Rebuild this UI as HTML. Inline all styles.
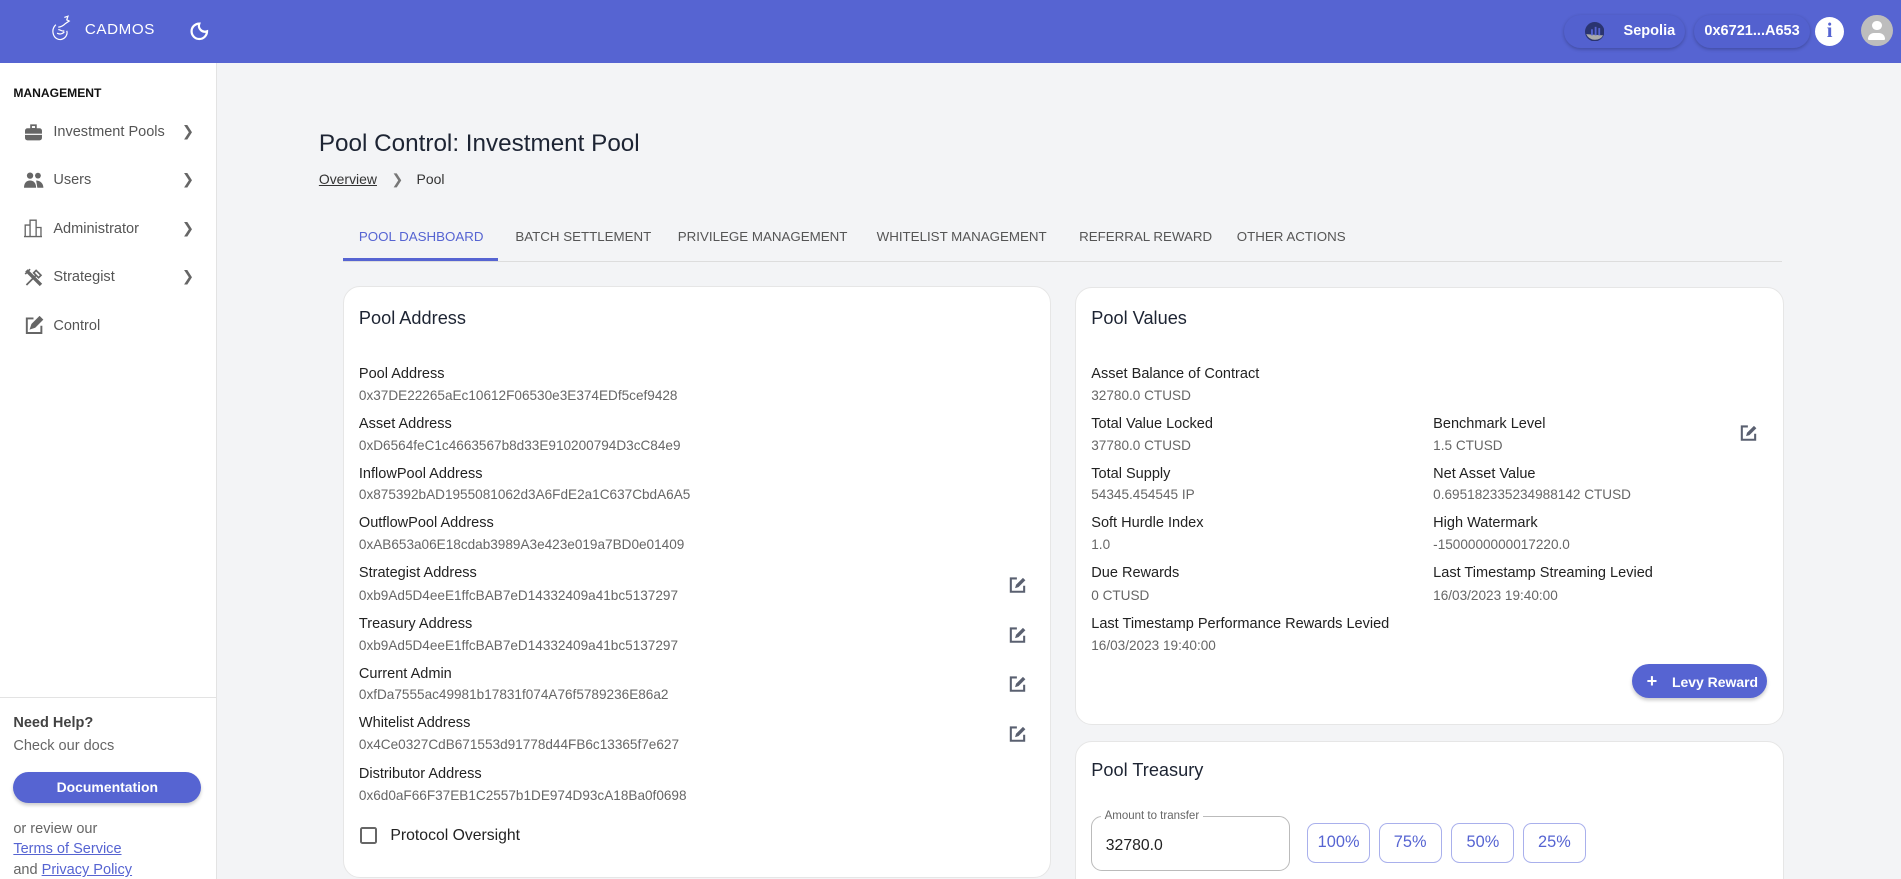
<!DOCTYPE html>
<html><head><meta charset="utf-8"><style>
*{box-sizing:border-box;margin:0;padding:0}
html,body{width:1901px;height:879px;overflow:hidden}
body{font-family:"Liberation Sans",Arial,sans-serif;background:#f3f4f6;}
#w{zoom:1.2125;width:1568px;height:725px;position:relative;overflow:hidden}
.a{position:absolute;white-space:nowrap}
.hdr{left:0;top:0;width:1568px;height:52px;background:#5664d2}
.pill{height:28px;border-radius:14px;background:#5361cf;box-shadow:0 1px 3px rgba(0,0,0,.25);color:#fff;font-weight:bold;font-size:12px;line-height:28px}
.side{left:0;top:52px;width:179px;height:673px;background:#fff;border-right:1px solid #e3e3e3}
.it{font-size:12px;color:#555;left:44px}
.chev{left:150px;font-size:12px;color:#666}
.card{background:#fff;border-radius:14px;border:1px solid #e6e6e6}
.ct{font-size:15px;color:#1d2433}
.lb{font-size:12px;color:#222}
.vl{font-size:11.2px;color:#666}
.tab{top:189px;font-size:11px;color:#555}
.pb{top:679px;height:33px;border:1px solid #a9b0ec;border-radius:7px;color:#5664d2;font-size:13.5px;text-align:center;line-height:31px}
</style></head><body><div id="w">
<div class="a hdr"></div>
<svg class="a" style="left:42px;top:12px" width="18" height="22" viewBox="0 0 18 22" fill="none" stroke="#fff" stroke-width="1"><path d="M11 2l3-1-1 3 2 1-3 2c-2 2-4 3-6 3M4 8c-2 2-3 5-2 8 1 3 4 5 7 4 3-1 5-4 4-7M6 12c2 0 3 2 5 1M5 15c2 1 4 1 6-1"/></svg>
<div class="a" style="left:70px;top:17px;color:#fff;font-size:12.5px;letter-spacing:.5px">CADMOS</div>
<svg class="a" style="left:156px;top:17px" width="17" height="17" viewBox="0 0 24 24"><path d="M12 3a9 9 0 1 0 9 9 7 7 0 0 1-9-9z" fill="none" stroke="#fff" stroke-width="2.6"/></svg>
<div class="a pill" style="left:1290px;top:12px;width:100px"><svg style="position:absolute;left:17px;top:6px" width="16" height="16" viewBox="0 0 16 16"><circle cx="8" cy="8" r="8" fill="#2a3470"/><path d="M1 10a8 8 0 0 0 14 1z" fill="#aaa"/><rect x="5" y="6" width="1.5" height="5" fill="#5664d2"/><rect x="8" y="4" width="1.5" height="7" fill="#5664d2"/><rect x="11" y="5" width="1.5" height="6" fill="#5664d2"/></svg><span style="position:absolute;left:49px">Sepolia</span></div>
<div class="a pill" style="left:1397px;top:12px;width:96px;text-align:center">0x6721...A653</div>
<div class="a" style="left:1497px;top:14px;width:24px;height:24px;border-radius:50%;background:#fff;color:#5664d2;font-weight:bold;font-size:17px;text-align:center;line-height:24px;font-family:'Liberation Serif',serif">i</div>
<div class="a" style="left:1535px;top:12px;width:26px;height:26px;border-radius:50%;background:#bdbdbd;overflow:hidden"><div style="position:absolute;left:9px;top:5px;width:8px;height:8px;border-radius:50%;background:#fff"></div><div style="position:absolute;left:6px;top:15px;width:14px;height:6px;border-radius:6px 6px 1px 1px;background:#fff"></div></div>

<div class="a side"></div>
<div class="a" style="left:11px;top:71px;font-size:10px;font-weight:bold;color:#111">MANAGEMENT</div>
<svg class="a" style="left:21px;top:102px" width="14" height="14" viewBox="0 0 14 14"><rect x="5" y="1" width="4" height="3" fill="none" stroke="#666" stroke-width="1.4"/><rect x="0" y="3.5" width="14" height="10" rx="2" fill="#666"/><rect x="0" y="8" width="14" height="1" fill="#fff"/></svg>
<div class="a it" style="top:102px">Investment Pools</div><div class="a chev" style="top:102px">❯</div>
<svg class="a" style="left:20px;top:142px" width="16" height="14" viewBox="0 0 16 14"><circle cx="5" cy="3" r="2.6" fill="#666"/><circle cx="11.5" cy="3" r="2.4" fill="#666"/><path d="M0 13c0-4 2-6 5-6s5 2 5 6zM10 7c3 0 6 2 6 6h-5z" fill="#666"/></svg>
<div class="a it" style="top:142px">Users</div><div class="a chev" style="top:142px">❯</div>
<svg class="a" style="left:20px;top:181px" width="15" height="15" viewBox="0 0 15 15" fill="none" stroke="#666" stroke-width="1.1"><path d="M1 14V5h4v9M5 14V1h5v13M10 14V7h4v7M0 14.5h15"/></svg>
<div class="a it" style="top:182px">Administrator</div><div class="a chev" style="top:182px">❯</div>
<svg class="a" style="left:20px;top:221px" width="16" height="16" viewBox="0 0 16 16" fill="none" stroke="#666" stroke-width="1.4"><path d="M2 14l8-8M10 2l4 4-2 2-4-4zM3 2l11 11-1 1L2 3zM1 5l4-4"/></svg>
<div class="a it" style="top:222px">Strategist</div><div class="a chev" style="top:222px">❯</div>
<svg class="a" style="left:21px;top:261px" width="15" height="15" viewBox="0 0 15 15" fill="none" stroke="#666" stroke-width="1.6"><path d="M7 2H1.5v12h12V8"/><path d="M5 10l1-3 6-6 2 2-6 6z" fill="#666"/></svg>
<div class="a it" style="top:262px">Control</div>
<div class="a" style="left:0;top:575px;width:179px;border-top:1px solid #e3e3e3"></div>
<div class="a" style="left:11px;top:590px;font-size:12px;color:#222;font-weight:bold;opacity:.85">Need Help?</div>
<div class="a" style="left:11px;top:609px;font-size:12px;color:#666">Check our docs</div>
<div class="a" style="left:11px;top:637px;width:155px;height:25px;border-radius:13px;background:#5664d2;color:#fff;font-size:11.5px;font-weight:bold;text-align:center;line-height:25px;box-shadow:0 2px 3px rgba(0,0,0,.2)">Documentation</div>
<div class="a" style="left:11px;top:677px;font-size:12px;color:#666">or review our</div>
<div class="a" style="left:11px;top:694px;font-size:12px;color:#5664d2;text-decoration:underline">Terms of Service</div>
<div class="a" style="left:11px;top:711px;font-size:12px;color:#666">and <span style="color:#5664d2;text-decoration:underline">Privacy Policy</span></div>

<div class="a" style="left:263px;top:107px;font-size:20px;color:#1d2433">Pool Control: Investment Pool</div>
<div class="a" style="left:263px;top:141px;font-size:11.5px;color:#333"><span style="text-decoration:underline">Overview</span><span style="margin:0 11px 0 12px;color:#777">❯</span>Pool</div>

<div class="a" style="left:283px;top:215px;width:1187px;border-top:1px solid #ddd"></div>
<div class="a" style="left:283px;top:213px;width:128px;height:2px;background:#5664d2"></div>
<div class="a tab" style="left:296px;color:#5664d2">POOL DASHBOARD</div>
<div class="a tab" style="left:425px">BATCH SETTLEMENT</div>
<div class="a tab" style="left:559px">PRIVILEGE MANAGEMENT</div>
<div class="a tab" style="left:723px">WHITELIST MANAGEMENT</div>
<div class="a tab" style="left:890px">REFERRAL REWARD</div>
<div class="a tab" style="left:1020px">OTHER ACTIONS</div>

<div class="a card" style="left:283px;top:236px;width:584px;height:488px"></div>
<div class="a ct" style="left:296px;top:254px">Pool Address</div>
<div class="a lb" style="left:296px;top:302px">Pool Address</div><div class="a vl" style="left:296px;top:320px">0x37DE22265aEc10612F06530e3E374EDf5cef9428</div>
<div class="a lb" style="left:296px;top:343px">Asset Address</div><div class="a vl" style="left:296px;top:361px">0xD6564feC1c4663567b8d33E910200794D3cC84e9</div>
<div class="a lb" style="left:296px;top:384px">InflowPool Address</div><div class="a vl" style="left:296px;top:402px">0x875392bAD1955081062d3A6FdE2a1C637CbdA6A5</div>
<div class="a lb" style="left:296px;top:425px">OutflowPool Address</div><div class="a vl" style="left:296px;top:443px">0xAB653a06E18cdab3989A3e423e019a7BD0e01409</div>
<div class="a lb" style="left:296px;top:466px">Strategist Address</div><div class="a vl" style="left:296px;top:485px">0xb9Ad5D4eeE1ffcBAB7eD14332409a41bc5137297</div>
<div class="a lb" style="left:296px;top:508px">Treasury Address</div><div class="a vl" style="left:296px;top:526px">0xb9Ad5D4eeE1ffcBAB7eD14332409a41bc5137297</div>
<div class="a lb" style="left:296px;top:549px">Current Admin</div><div class="a vl" style="left:296px;top:567px">0xfDa7555ac49981b17831f074A76f5789236E86a2</div>
<div class="a lb" style="left:296px;top:590px">Whitelist Address</div><div class="a vl" style="left:296px;top:608px">0x4Ce0327CdB671553d91778d44FB6c13365f7e627</div>
<div class="a lb" style="left:296px;top:632px">Distributor Address</div><div class="a vl" style="left:296px;top:650px">0x6d0aF66F37EB1C2557b1DE974D93cA18Ba0f0698</div>
<div class="a" style="left:297px;top:682px;width:14px;height:14px;border:2px solid #666;border-radius:2px"></div>
<div class="a" style="left:322px;top:682px;font-size:13px;color:#222">Protocol Oversight</div>

<div class="a card" style="left:887px;top:237px;width:584px;height:361px"></div>
<div class="a ct" style="left:900px;top:254px">Pool Values</div>
<div class="a lb" style="left:900px;top:302px">Asset Balance of Contract</div><div class="a vl" style="left:900px;top:320px">32780.0 CTUSD</div>
<div class="a lb" style="left:900px;top:343px">Total Value Locked</div><div class="a vl" style="left:900px;top:361px">37780.0 CTUSD</div>
<div class="a lb" style="left:1182px;top:343px">Benchmark Level</div><div class="a vl" style="left:1182px;top:361px">1.5 CTUSD</div>
<div class="a lb" style="left:900px;top:384px">Total Supply</div><div class="a vl" style="left:900px;top:402px">54345.454545 IP</div>
<div class="a lb" style="left:1182px;top:384px">Net Asset Value</div><div class="a vl" style="left:1182px;top:402px">0.695182335234988142 CTUSD</div>
<div class="a lb" style="left:900px;top:425px">Soft Hurdle Index</div><div class="a vl" style="left:900px;top:443px">1.0</div>
<div class="a lb" style="left:1182px;top:425px">High Watermark</div><div class="a vl" style="left:1182px;top:443px">-1500000000017220.0</div>
<div class="a lb" style="left:900px;top:466px">Due Rewards</div><div class="a vl" style="left:900px;top:485px">0 CTUSD</div>
<div class="a lb" style="left:1182px;top:466px">Last Timestamp Streaming Levied</div><div class="a vl" style="left:1182px;top:485px">16/03/2023 19:40:00</div>
<div class="a lb" style="left:900px;top:508px">Last Timestamp Performance Rewards Levied</div><div class="a vl" style="left:900px;top:526px">16/03/2023 19:40:00</div>
<div class="a" style="left:1346px;top:548px;width:111px;height:28px;border-radius:14px;background:#5664d2;color:#fff;font-size:11.5px;font-weight:bold;line-height:30px;box-shadow:0 2px 3px rgba(0,0,0,.2)"><span style="position:absolute;left:12px;top:-1px;font-size:15px">+</span><span style="position:absolute;left:33px">Levy Reward</span></div>

<div class="a card" style="left:887px;top:611px;width:584px;height:130px"></div>
<div class="a ct" style="left:900px;top:627px">Pool Treasury</div>
<div class="a" style="left:900px;top:673px;width:164px;height:45px;border:1px solid #bbb;border-radius:9px"></div>
<div class="a" style="left:908px;top:668px;background:#fff;padding:0 3px;font-size:9.5px;color:#666">Amount to transfer</div>
<div class="a" style="left:912px;top:690px;font-size:13px;color:#222">32780.0</div>
<div class="a pb" style="left:1078px;width:52px">100%</div>
<div class="a pb" style="left:1137px;width:52px">75%</div>
<div class="a pb" style="left:1197px;width:52px">50%</div>
<div class="a pb" style="left:1256px;width:52px">25%</div>

<svg width="0" height="0" style="position:absolute"><defs><g id="ed"><path d="M6.5 2H1.5v11h11V8" fill="none" stroke="#5a6070" stroke-width="1.7"/><path d="M5 10l.8-2.8L11.5 1.5l2 2L7.8 9.2z" fill="#5a6070"/></g></defs></svg>
<svg class="a" style="left:832px;top:475px" width="15" height="15"><use href="#ed"/></svg>
<svg class="a" style="left:832px;top:516px" width="15" height="15"><use href="#ed"/></svg>
<svg class="a" style="left:832px;top:557px" width="15" height="15"><use href="#ed"/></svg>
<svg class="a" style="left:832px;top:598px" width="15" height="15"><use href="#ed"/></svg>
<svg class="a" style="left:1435px;top:350px" width="15" height="15"><use href="#ed"/></svg>
</div></body></html>
